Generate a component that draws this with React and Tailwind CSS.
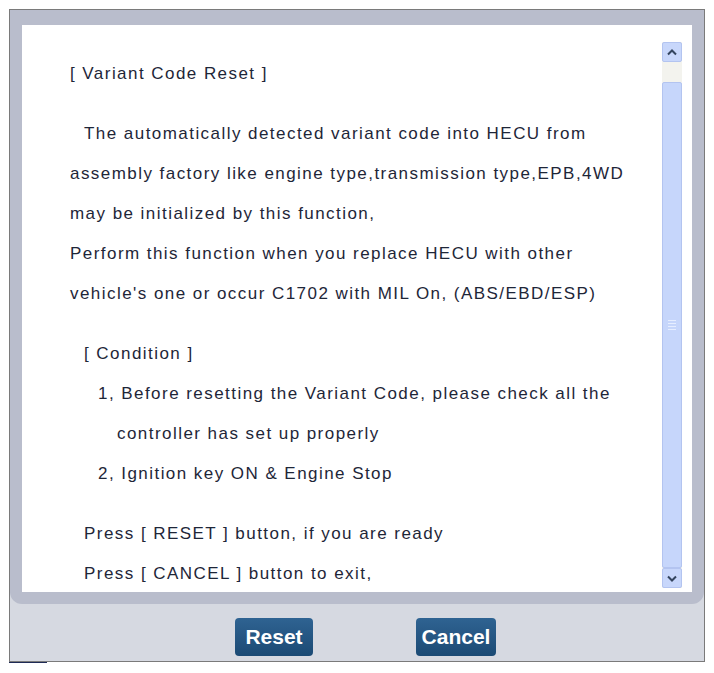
export default function App() {
  const lines = [
    { text: "[ Variant Code Reset ]", indent: "pl-[48px]" },
    { gap: true },
    { text: "The automatically detected variant code into HECU from", indent: "pl-[62px]" },
    { text: "assembly factory like engine type,transmission type,EPB,4WD", indent: "pl-[48px]" },
    { text: "may be initialized by this function,", indent: "pl-[48px]" },
    { text: "Perform this function when you replace HECU with other", indent: "pl-[48px]" },
    { text: "vehicle's one or occur C1702 with MIL On, (ABS/EBD/ESP)", indent: "pl-[48px]" },
    { gap: true },
    { text: "[ Condition ]", indent: "pl-[62px]" },
    { text: "1, Before resetting the Variant Code, please check all the", indent: "pl-[76px]" },
    { text: "controller has set up properly", indent: "pl-[95px]" },
    { text: "2, Ignition key ON & Engine Stop", indent: "pl-[76px]" },
    { gap: true },
    { text: "Press [ RESET ] button, if you are ready", indent: "pl-[62px]" },
    { text: "Press [ CANCEL ] button to exit,", indent: "pl-[62px]" },
  ];

  return (
    <div className="h-[673px] w-[714px] bg-white pl-[9px] pt-[9px]">
      <div className="flex h-[653px] w-[696px] flex-col border border-[#7a7a7a] bg-[#d6d9e1]">
        <div className="rounded-b-[12px] bg-[#b9bdcc] px-[12px] pt-[15px] pb-[12px]">
          <div className="flex h-[567px] bg-white">
            <div className="flex-1 pt-[37px] font-['Liberation_Sans',sans-serif] text-[17px] tracking-[1.45px] text-[#1e2638]">
              {lines.map((l, i) =>
                l.gap ? (
                  <div key={i} className="h-[20px]" />
                ) : (
                  <div key={i} className={`h-[40px] whitespace-pre leading-[24px] ${l.indent}`}>
                    {l.text}
                  </div>
                )
              )}
            </div>
            <div className="mr-[10px] mt-[17px] mb-[4px] flex w-[20px] flex-col bg-[#f3f3ee]">
              <div className="flex h-[20px] items-center justify-center rounded-[2px] border border-[#b3c4f0] bg-[#c8d7fb]">
                <svg width="10" height="7" viewBox="0 0 10 7">
                  <path d="M1 5.5 L5 1.5 L9 5.5" fill="none" stroke="#34455f" strokeWidth="2" />
                </svg>
              </div>
              <div className="h-[20px]" />
              <div className="flex flex-1 items-center justify-center rounded-[2px] border border-[#b3c4f0] bg-[#c6d6fb]">
                <div className="flex w-[8px] flex-col gap-[2px]">
                  <div className="h-px bg-[#e6eeff]" />
                  <div className="h-px bg-[#e6eeff]" />
                  <div className="h-px bg-[#e6eeff]" />
                  <div className="h-px bg-[#e6eeff]" />
                </div>
              </div>
              <div className="flex h-[20px] items-center justify-center rounded-[2px] border border-[#b3c4f0] bg-[#c8d7fb]">
                <svg width="10" height="7" viewBox="0 0 10 7">
                  <path d="M1 1.5 L5 5.5 L9 1.5" fill="none" stroke="#34455f" strokeWidth="2" />
                </svg>
              </div>
            </div>
          </div>
        </div>
        <div className="flex flex-1 items-center justify-center gap-[103px] pl-[17px] pt-[8px]">
          <button
            type="button"
            className="h-[38px] w-[78px] rounded-[4px] bg-gradient-to-b from-[#2f6392] to-[#1b4a74] font-['Liberation_Sans',sans-serif] text-[21px] font-bold text-white"
          >
            Reset
          </button>
          <button
            type="button"
            className="h-[38px] w-[80px] rounded-[4px] bg-gradient-to-b from-[#2f6392] to-[#1b4a74] font-['Liberation_Sans',sans-serif] text-[21px] font-bold text-white"
          >
            Cancel
          </button>
        </div>
      </div>
      <div className="h-px w-[38px] bg-[#1e2a55]" />
    </div>
  );
}
